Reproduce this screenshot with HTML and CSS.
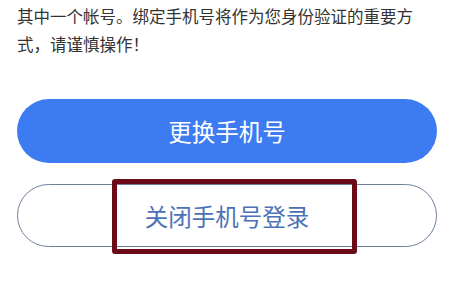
FILE: index.html
```html
<!DOCTYPE html>
<html lang="zh-CN">
<head>
<meta charset="utf-8">
<title>绑定手机号</title>
<link rel="stylesheet" href="styles.css">
</head>
<body>
<div class="page">
  <p class="tip">其中一个帐号。绑定手机号将作为您身份验证的重要方式，请谨慎操作！</p>
  <div class="btn btn-primary">更换手机号</div>
  <div class="outline-wrap">
    <div class="btn btn-outline">关闭手机号登录</div>
    <div class="mark"></div>
  </div>
</div>
</body>
</html>
```

FILE: styles.css
```css
body { margin:0; padding:0; background:#fff; font-family:"Noto Sans CJK SC", "Noto Sans", sans-serif; }
.page { padding:2px 0 20px 17px; }
.tip { margin:0; font-size:16.5px; line-height:28px; color:#333; width:400px; }
.btn { width:420px; height:64px; border-radius:32px; display:flex; align-items:center; justify-content:center; font-size:23.5px; box-sizing:border-box; }
.btn-primary { margin-top:41px; background:#3c7bf2; color:#fff; }
.outline-wrap { position:relative; width:420px; margin-top:21px; }
.btn-outline { height:63px; border:1.5px solid #6f809b; color:#4b72b6; }
.mark { position:absolute; left:95px; top:-5px; width:245px; height:75px; border:5px solid #6a0b17; border-radius:3px; box-sizing:border-box; }
```
